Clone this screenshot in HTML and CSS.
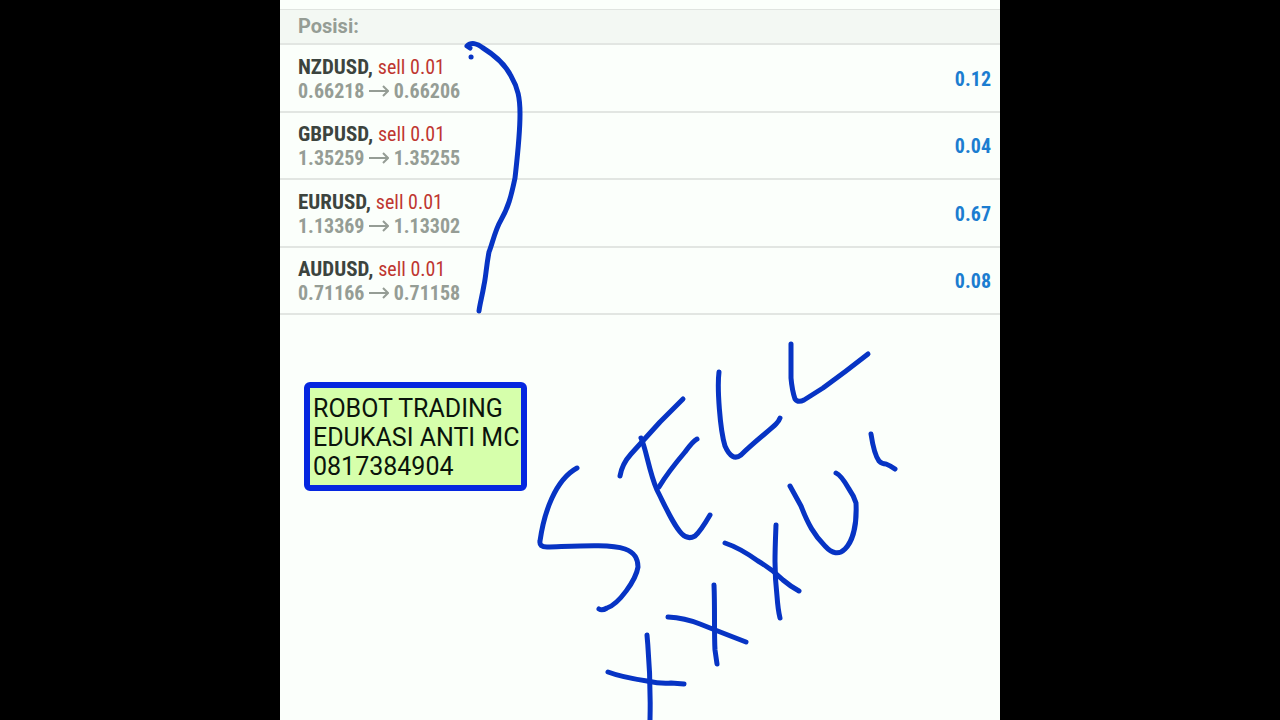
FILE: index.html
```html
<!DOCTYPE html>
<html lang="id">
<head>
    <meta charset="UTF-8">
    <meta name="viewport" content="width=device-width, initial-scale=1.0">
    <title>Posisi</title>
    <link rel="stylesheet" href="styles.css">
</head>
<body>
    <main class="screen">
        <h1 class="section-title">Posisi:</h1>
        <ul class="positions">
            <li class="position">
                <div>
                    <div class="symbol">NZDUSD, <span class="sell">sell 0.01</span></div>
                    <div class="prices">0.66218 <svg class="arrow" viewBox="0 0 20 12"><path d="M0 6H19M14 1L19 6L14 11"/></svg> 0.66206</div>
                </div>
                <div class="profit">0.12</div>
            </li>
            <li class="position">
                <div>
                    <div class="symbol">GBPUSD, <span class="sell">sell 0.01</span></div>
                    <div class="prices">1.35259 <svg class="arrow" viewBox="0 0 20 12"><path d="M0 6H19M14 1L19 6L14 11"/></svg> 1.35255</div>
                </div>
                <div class="profit">0.04</div>
            </li>
            <li class="position">
                <div>
                    <div class="symbol">EURUSD, <span class="sell">sell 0.01</span></div>
                    <div class="prices">1.13369 <svg class="arrow" viewBox="0 0 20 12"><path d="M0 6H19M14 1L19 6L14 11"/></svg> 1.13302</div>
                </div>
                <div class="profit">0.67</div>
            </li>
            <li class="position">
                <div>
                    <div class="symbol">AUDUSD, <span class="sell">sell 0.01</span></div>
                    <div class="prices">0.71166 <svg class="arrow" viewBox="0 0 20 12"><path d="M0 6H19M14 1L19 6L14 11"/></svg> 0.71158</div>
                </div>
                <div class="profit">0.08</div>
            </li>
        </ul>
        <p class="note">ROBOT TRADING<br>EDUKASI ANTI MC<br>0817384904</p>

        <!-- pen strokes over the screen -->
        <svg class="ink" viewBox="0 0 720 720" aria-hidden="true">
            <!-- bracket beside the list -->
            <path d="M190 48L187 46C191 42 197 43 203 48C216 56 225 64 231 76C238 88 240 98 240 114C240 135 237 160 235 178C231 197 228 208 221 220C215 230 212 245 209 252C206 268 206 276 204 285C202 297 200 303 199 311"/>
            <path d="M191 57h.1"/>
            <!-- S -->
            <path d="M297 468C275 480 264 513 260 541Q259 547 267 547C300 546 330 544 345 549C356 553 358 560 358 567C356 580 339 604 327 608Q322 611 319 609"/>
            <!-- E -->
            <path d="M403 399L380 422L351 454Q342 464 340 476"/>
            <path d="M361 438C366 448 369 472 377 490C387 510 394 526 402 534Q408 540 415 536Q420 532 430 515"/>
            <path d="M417 439Q413 441 405 452Q388 472 379 487"/>
            <!-- L L -->
            <path d="M439 372C437 388 440 430 445 446Q452 462 461 455C473 443 490 430 496 424Q499 421 500 418"/>
            <path d="M511 344V378Q512 390 515 399Q518 403 524 400L543 388L566 371L588 354"/>
            <!-- X X X -->
            <path d="M367 635C369 660 371 675 370 720"/>
            <path d="M328 672Q341 677 367 681Q381 684 391 683L404 684"/>
            <path d="M434 585C435 609 434 632 435 650L437 664"/>
            <path d="M388 617Q405 618 420 624Q440 632 466 642"/>
            <path d="M496 525C495 550 494 571 497 596Q498 610 500 618"/>
            <path d="M445 543Q460 548 478 561Q492 569 503 580Q510 586 519 591"/>
            <!-- U -->
            <path d="M510 486L521 506C528 524 534 535 545 546Q556 558 565 549C573 541 577 524 576 503Q574 496 569 489Q561 475 556 473"/>
            <path d="M591 434Q594 454 599 461Q602 464 606 464Q611 466 615 469"/>
        </svg>
    </main>
</body>
</html>
```

FILE: styles.css
```css
* {
    box-sizing: border-box;
}

body {
    margin: 0;
    background-color: #000;
    font-family: Roboto, Arial, sans-serif;
}

.screen {
    position: relative;
    max-width: 720px;
    min-height: 100vh;
    margin: 0 auto;
    padding-top: 9px;
    background-color: #fbfffb;
    overflow: hidden;
}

.section-title {
    margin: 0;
    padding: 0 18px;
    border-top: 1px solid #e0e4e0;
    border-bottom: 2px solid #e2e6e2;
    background-color: #f3f8f3;
    color: #959d95;
    font-size: 20px;
    font-weight: 700;
    line-height: 33px;
}

.positions {
    display: grid;
    grid-auto-rows: 1fr;
    min-height: 270px;
    margin: 0;
    padding: 0;
    list-style: none;
    font-family: "Roboto Condensed", "Liberation Sans Narrow", Roboto, sans-serif;
    font-size: 20px;
    line-height: 24px;
}

.position {
    display: flex;
    justify-content: space-between;
    align-items: center;
    padding: 2px 9px 0 18px;
    border-bottom: 2px solid #e2e6e2;
}

.symbol {
    color: #3c443e;
    font-size: 21px;
    font-weight: 700;
}

.sell {
    color: #bf3630;
    font-size: 20px;
    font-weight: 400;
}

.prices {
    color: #959d95;
    font-weight: 700;
}

.arrow {
    width: 20px;
    height: 12px;
    vertical-align: 1px;
    fill: none;
    stroke: #959d95;
    stroke-width: 2;
}

.profit {
    color: #1b7dd0;
    font-weight: 700;
}

.note {
    width: fit-content;
    margin: 67px 24px 0;
    padding: 6px 2px 4px 3px;
    border: 6px solid #0527e0;
    border-radius: 6px;
    background-color: #d6ffab;
    color: #0b140b;
    font-size: 25px;
    line-height: 29px;
}

.ink {
    position: absolute;
    top: 0;
    left: 0;
    width: 100%;
    fill: none;
    stroke: #0734c4;
    stroke-width: 5;
    stroke-linecap: round;
    stroke-linejoin: round;
}
```
